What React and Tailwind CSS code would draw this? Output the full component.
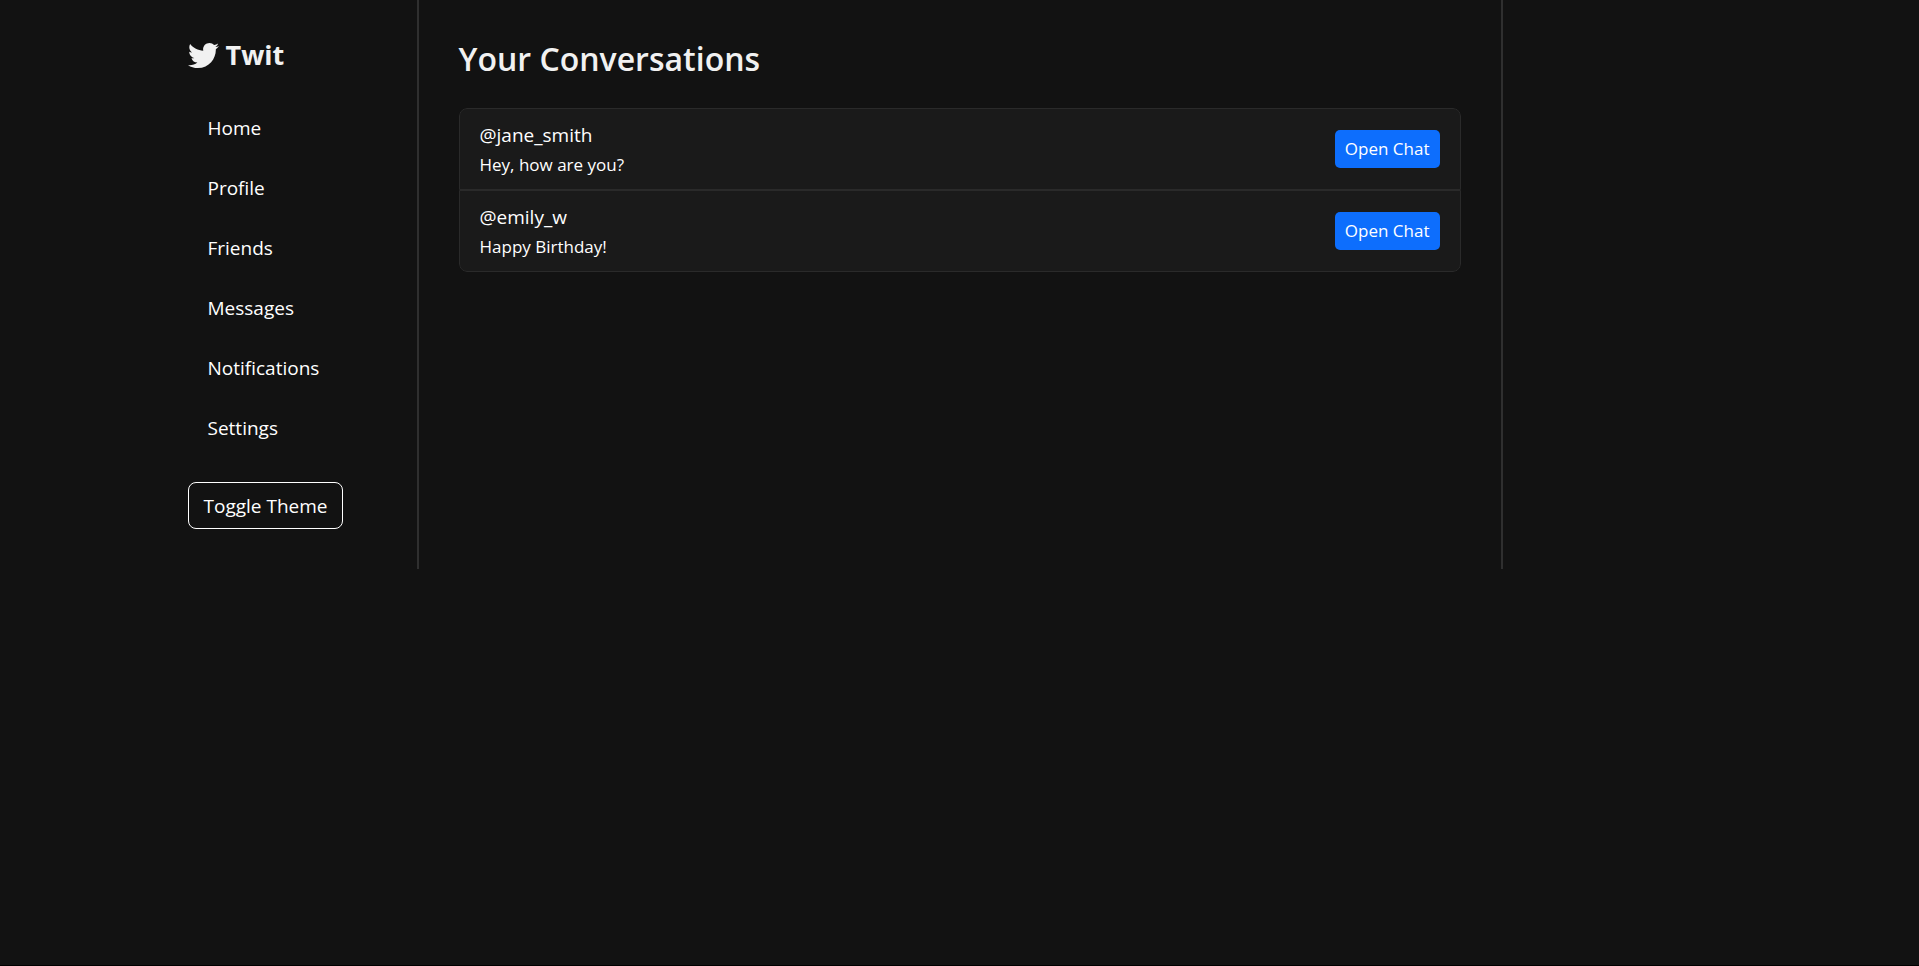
import { FaTwitter } from "react-icons/fa";

const links = ["Home", "Profile", "Friends", "Messages", "Notifications", "Settings"];

const conversations = [
  { user: "@jane_smith", message: "Hey, how are you?" },
  { user: "@emily_w", message: "Happy Birthday!" },
];

function Sidebar() {
  return (
    <aside className="col-span-2 border-r border-[#2f2f2f] py-10 pr-10 pl-[41px]">
      <h2 className="flex h-[30px] items-center gap-[7px] text-[27px] font-bold text-[#f1f1f1]">
        <FaTwitter className="size-[31px] shrink-0" aria-hidden="true" />
        Twit
      </h2>
      <nav className="mt-[33px] flex flex-col gap-2.5">
        {links.map((label) => (
          <a key={label} href="#" className="px-5 py-2.5 text-[19px] leading-[30px] text-white">
            {label}
          </a>
        ))}
      </nav>
      <button
        type="button"
        className="mt-[29px] h-[47px] rounded-lg border border-white px-[15px] text-[19px] leading-[30px] whitespace-nowrap text-white"
      >
        Toggle Theme
      </button>
    </aside>
  );
}

function Conversations() {
  return (
    <main className="col-span-8 border-x border-[#2f2f2f] p-10">
      <h1 className="text-[32px] leading-[38px] font-semibold text-[#f1f1f1]">Your Conversations</h1>
      <ul className="mt-[30px] overflow-hidden rounded-lg">
        {conversations.map(({ user, message }) => (
          <li
            key={user}
            className="flex items-center justify-between border border-[#2a2a2a] bg-[#1a1a1a] px-5 py-2.5 text-white first:rounded-t-lg last:rounded-b-lg"
          >
            <div>
              <p className="text-[19px] leading-[32px]">{user}</p>
              <p className="text-[17px] leading-[28px]">{message}</p>
            </div>
            <button type="button" className="h-[38px] rounded-[5px] bg-[#0d6efd] px-2.5 text-[17px] text-white">
              Open Chat
            </button>
          </li>
        ))}
      </ul>
    </main>
  );
}

export default function App() {
  return (
    <div className="min-h-screen border-b border-black bg-[#121212] font-['Open_Sans','Noto_Sans',sans-serif]">
      <div className="mx-auto grid max-w-[1626px] grid-cols-12">
        <Sidebar />
        <Conversations />
        <div className="col-span-2 border-l border-[#2f2f2f]" />
      </div>
    </div>
  );
}
